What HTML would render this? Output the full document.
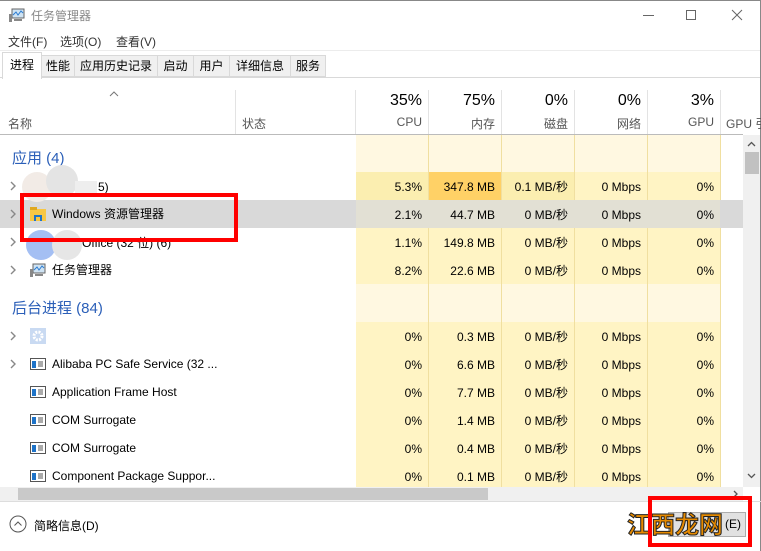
<!DOCTYPE html>
<html><head><meta charset="utf-8"><style>
*{margin:0;padding:0;box-sizing:border-box}
body{width:761px;height:551px;overflow:hidden;background:#fff;font-family:"Liberation Sans","Noto Sans CJK SC",sans-serif;font-size:12px;color:#000;position:relative}
.a{position:absolute;white-space:nowrap}
.r{text-align:right}
.tab{position:absolute;top:55px;height:22px;border:1px solid #d9d9d9;background:#f0f0f0;font-size:12px;line-height:20px;text-align:center}
.cell{position:absolute;height:28px;line-height:30px;text-align:right;padding-right:6px;font-size:12px}
.vl{position:absolute;width:1px;background:#e3e3e3}
.chev{position:absolute;left:10px;width:6px;height:10px}
.nm{position:absolute;line-height:16px}
</style></head><body>
<div class="a" style="left:0;top:0;width:761px;height:1px;background:#888"></div>
<div class="a" style="left:760px;top:0;width:1px;height:551px;background:#888"></div>
<svg class="a" style="left:9px;top:8px" width="16" height="14"><rect x="3" y="1" width="12" height="9" fill="#cfe3f3" stroke="#666"/><polyline points="4,7 7,4 9,7 12,3 14,5" fill="none" stroke="#2b7bd1"/><rect x="0" y="6" width="3" height="8" fill="#888"/><rect x="5" y="11" width="8" height="2" fill="#888"/></svg>
<div class="a" style="left:31px;top:7px;color:#888;font-size:12px">任务管理器</div>
<div class="a" style="left:643px;top:15px;width:11px;height:1px;background:#666"></div>
<div class="a" style="left:686px;top:10px;width:10px;height:10px;border:1px solid #666"></div>
<svg class="a" style="left:731px;top:9px" width="12" height="12"><path d="M1 1L11 11M11 1L1 11" stroke="#666"/></svg>
<div class="a" style="left:8px;top:33px;color:#333">文件(F)</div>
<div class="a" style="left:60px;top:33px;color:#333">选项(O)</div>
<div class="a" style="left:116px;top:33px;color:#333">查看(V)</div>
<div class="a" style="left:0;top:50px;width:760px;height:1px;background:#ececec"></div>
<div class="a" style="left:0;top:77px;width:760px;height:1px;background:#d9d9d9"></div>
<div class="tab" style="left:41px;width:34px">性能</div>
<div class="tab" style="left:74px;width:84px">应用历史记录</div>
<div class="tab" style="left:157px;width:37px">启动</div>
<div class="tab" style="left:193px;width:37px">用户</div>
<div class="tab" style="left:229px;width:62px">详细信息</div>
<div class="tab" style="left:290px;width:36px">服务</div>
<div class="a" style="left:2px;top:52px;width:40px;height:27px;background:#fff;border:1px solid #d9d9d9;border-bottom:none;line-height:24px;text-align:center">进程</div>
<svg class="a" style="left:109px;top:91px" width="10" height="6"><path d="M1 5L5 1L9 5" fill="none" stroke="#777"/></svg>
<div class="a" style="left:8px;top:115px;color:#555">名称</div>
<div class="a" style="left:242px;top:115px;color:#555">状态</div>
<div class="vl" style="left:235px;top:90px;height:44px"></div>
<div class="vl" style="left:355px;top:90px;height:44px"></div>
<div class="vl" style="left:428px;top:90px;height:44px"></div>
<div class="vl" style="left:501px;top:90px;height:44px"></div>
<div class="vl" style="left:574px;top:90px;height:44px"></div>
<div class="vl" style="left:647px;top:90px;height:44px"></div>
<div class="vl" style="left:720px;top:90px;height:44px"></div>
<div class="a r" style="left:355px;width:67px;top:92px;font-size:16px">35%</div>
<div class="a r" style="left:428px;width:67px;top:92px;font-size:16px">75%</div>
<div class="a r" style="left:501px;width:67px;top:92px;font-size:16px">0%</div>
<div class="a r" style="left:574px;width:67px;top:92px;font-size:16px">0%</div>
<div class="a r" style="left:647px;width:67px;top:92px;font-size:16px">3%</div>
<div class="a r" style="left:355px;width:67px;top:115px;color:#555">CPU</div>
<div class="a r" style="left:428px;width:67px;top:115px;color:#555">内存</div>
<div class="a r" style="left:501px;width:67px;top:115px;color:#555">磁盘</div>
<div class="a r" style="left:574px;width:67px;top:115px;color:#555">网络</div>
<div class="a r" style="left:647px;width:67px;top:115px;color:#555">GPU</div>
<div class="a" style="left:726px;top:115px;color:#555">GPU 引</div>
<div class="a" style="left:0;top:134px;width:743px;height:1px;background:#bbb"></div>
<div class="a" style="left:356px;top:135px;width:364px;height:352px;background:#fff4c4"></div>
<div class="a" style="left:356px;top:135px;width:364px;height:37px;background:#fff8e1"></div>
<div class="a" style="left:356px;top:284px;width:364px;height:38px;background:#fff8e1"></div>
<div class="vl" style="left:428px;top:135px;height:352px;background:#f0dfa0"></div>
<div class="vl" style="left:501px;top:135px;height:352px;background:#f0dfa0"></div>
<div class="vl" style="left:574px;top:135px;height:352px;background:#f0dfa0"></div>
<div class="vl" style="left:647px;top:135px;height:352px;background:#f0dfa0"></div>
<div class="vl" style="left:720px;top:135px;height:352px;background:#f0dfa0"></div>
<div class="a" style="left:12px;top:147px;font-size:15px;color:#2b5fb8">应用 (4)</div>
<div class="a" style="left:12px;top:297px;font-size:15px;color:#2b5fb8">后台进程 (84)</div>
<div class="a" style="left:0;top:200px;width:743px;height:28px;background:#d9d9d9"></div>
<div class="a" style="left:356px;top:200px;width:364px;height:28px;background:#e2e0d4"></div>
<div class="a" style="left:356px;top:172px;width:72px;height:28px;background:#fbeeb0"></div>
<div class="a" style="left:429px;top:172px;width:72px;height:28px;background:#ffd166"></div>
<div class="a" style="left:502px;top:172px;width:72px;height:28px;background:#fbeeb0"></div>
<div class="cell" style="left:355px;top:172px;width:73px">5.3%</div><div class="cell" style="left:428px;top:172px;width:73px">347.8 MB</div><div class="cell" style="left:501px;top:172px;width:73px">0.1 MB/秒</div><div class="cell" style="left:574px;top:172px;width:73px">0 Mbps</div><div class="cell" style="left:647px;top:172px;width:73px">0%</div>
<div class="cell" style="left:355px;top:200px;width:73px">2.1%</div><div class="cell" style="left:428px;top:200px;width:73px">44.7 MB</div><div class="cell" style="left:501px;top:200px;width:73px">0 MB/秒</div><div class="cell" style="left:574px;top:200px;width:73px">0 Mbps</div><div class="cell" style="left:647px;top:200px;width:73px">0%</div>
<div class="cell" style="left:355px;top:228px;width:73px">1.1%</div><div class="cell" style="left:428px;top:228px;width:73px">149.8 MB</div><div class="cell" style="left:501px;top:228px;width:73px">0 MB/秒</div><div class="cell" style="left:574px;top:228px;width:73px">0 Mbps</div><div class="cell" style="left:647px;top:228px;width:73px">0%</div>
<div class="cell" style="left:355px;top:256px;width:73px">8.2%</div><div class="cell" style="left:428px;top:256px;width:73px">22.6 MB</div><div class="cell" style="left:501px;top:256px;width:73px">0 MB/秒</div><div class="cell" style="left:574px;top:256px;width:73px">0 Mbps</div><div class="cell" style="left:647px;top:256px;width:73px">0%</div>
<div class="cell" style="left:355px;top:322px;width:73px">0%</div><div class="cell" style="left:428px;top:322px;width:73px">0.3 MB</div><div class="cell" style="left:501px;top:322px;width:73px">0 MB/秒</div><div class="cell" style="left:574px;top:322px;width:73px">0 Mbps</div><div class="cell" style="left:647px;top:322px;width:73px">0%</div>
<div class="cell" style="left:355px;top:350px;width:73px">0%</div><div class="cell" style="left:428px;top:350px;width:73px">6.6 MB</div><div class="cell" style="left:501px;top:350px;width:73px">0 MB/秒</div><div class="cell" style="left:574px;top:350px;width:73px">0 Mbps</div><div class="cell" style="left:647px;top:350px;width:73px">0%</div>
<div class="cell" style="left:355px;top:378px;width:73px">0%</div><div class="cell" style="left:428px;top:378px;width:73px">7.7 MB</div><div class="cell" style="left:501px;top:378px;width:73px">0 MB/秒</div><div class="cell" style="left:574px;top:378px;width:73px">0 Mbps</div><div class="cell" style="left:647px;top:378px;width:73px">0%</div>
<div class="cell" style="left:355px;top:406px;width:73px">0%</div><div class="cell" style="left:428px;top:406px;width:73px">1.4 MB</div><div class="cell" style="left:501px;top:406px;width:73px">0 MB/秒</div><div class="cell" style="left:574px;top:406px;width:73px">0 Mbps</div><div class="cell" style="left:647px;top:406px;width:73px">0%</div>
<div class="cell" style="left:355px;top:434px;width:73px">0%</div><div class="cell" style="left:428px;top:434px;width:73px">0.4 MB</div><div class="cell" style="left:501px;top:434px;width:73px">0 MB/秒</div><div class="cell" style="left:574px;top:434px;width:73px">0 Mbps</div><div class="cell" style="left:647px;top:434px;width:73px">0%</div>
<div class="cell" style="left:355px;top:462px;width:73px">0%</div><div class="cell" style="left:428px;top:462px;width:73px">0.1 MB</div><div class="cell" style="left:501px;top:462px;width:73px">0 MB/秒</div><div class="cell" style="left:574px;top:462px;width:73px">0 Mbps</div><div class="cell" style="left:647px;top:462px;width:73px">0%</div>
<svg class="chev" style="top:181px" viewBox="0 0 6 10"><path d="M1 1L5 5L1 9" fill="none" stroke="#888" stroke-width="1.4"/></svg>
<svg class="chev" style="top:209px" viewBox="0 0 6 10"><path d="M1 1L5 5L1 9" fill="none" stroke="#888" stroke-width="1.4"/></svg>
<svg class="chev" style="top:237px" viewBox="0 0 6 10"><path d="M1 1L5 5L1 9" fill="none" stroke="#888" stroke-width="1.4"/></svg>
<svg class="chev" style="top:265px" viewBox="0 0 6 10"><path d="M1 1L5 5L1 9" fill="none" stroke="#888" stroke-width="1.4"/></svg>
<svg class="chev" style="top:331px" viewBox="0 0 6 10"><path d="M1 1L5 5L1 9" fill="none" stroke="#888" stroke-width="1.4"/></svg>
<svg class="chev" style="top:359px" viewBox="0 0 6 10"><path d="M1 1L5 5L1 9" fill="none" stroke="#888" stroke-width="1.4"/></svg>
<div class="a" style="left:22px;top:172px;width:30px;height:30px;border-radius:50%;background:#f2ebe6"></div>
<div class="a" style="left:46px;top:165px;width:32px;height:32px;border-radius:50%;background:#e4e4e4"></div>
<div class="a" style="left:75px;top:181px;width:22px;height:12px;background:#eee"></div>
<div class="nm" style="left:98px;top:179px">5)</div>
<div class="a" style="left:26px;top:230px;width:30px;height:30px;border-radius:50%;background:#a4bff3"></div>
<div class="a" style="left:52px;top:230px;width:30px;height:30px;border-radius:50%;background:#e6e6e6"></div>
<div class="nm" style="left:82px;top:235px">Office (32 位) (6)</div>
<svg class="a" style="left:30px;top:207px" width="16" height="14"><rect x="0" y="2" width="16" height="12" fill="#f7c744"/><rect x="0" y="0" width="7" height="3" fill="#e0a820"/><rect x="4" y="8" width="8" height="6" fill="#1e73c8"/><rect x="6" y="10" width="4" height="4" fill="#f7c744"/></svg>
<div class="nm" style="left:52px;top:206px">Windows 资源管理器</div>
<svg class="a" style="left:30px;top:263px" width="16" height="14"><rect x="3" y="1" width="12" height="9" fill="#cfe3f3" stroke="#666"/><polyline points="4,7 7,4 9,7 12,3 14,5" fill="none" stroke="#2b7bd1"/><rect x="0" y="6" width="3" height="8" fill="#888"/><rect x="5" y="11" width="8" height="2" fill="#888"/></svg>
<div class="nm" style="left:52px;top:262px">任务管理器</div>
<svg class="a" style="left:30px;top:328px" width="16" height="16"><rect width="16" height="16" fill="#c9daf2"/><circle cx="8" cy="8" r="4" fill="none" stroke="#fff" stroke-width="3" stroke-dasharray="2 1.2"/></svg>
<svg class="a" style="left:30px;top:358px" width="16" height="12"><rect x=".5" y=".5" width="15" height="11" fill="#fff" stroke="#555"/><rect x="2" y="3" width="4" height="7" fill="#1e73c8"/><path d="M8 4h5M8 6h5M8 8h5" stroke="#555"/></svg>
<div class="nm" style="left:52px;top:356px">Alibaba PC Safe Service (32 ...</div>
<svg class="a" style="left:30px;top:386px" width="16" height="12"><rect x=".5" y=".5" width="15" height="11" fill="#fff" stroke="#555"/><rect x="2" y="3" width="4" height="7" fill="#1e73c8"/><path d="M8 4h5M8 6h5M8 8h5" stroke="#555"/></svg>
<div class="nm" style="left:52px;top:384px">Application Frame Host</div>
<svg class="a" style="left:30px;top:414px" width="16" height="12"><rect x=".5" y=".5" width="15" height="11" fill="#fff" stroke="#555"/><rect x="2" y="3" width="4" height="7" fill="#1e73c8"/><path d="M8 4h5M8 6h5M8 8h5" stroke="#555"/></svg>
<div class="nm" style="left:52px;top:412px">COM Surrogate</div>
<svg class="a" style="left:30px;top:442px" width="16" height="12"><rect x=".5" y=".5" width="15" height="11" fill="#fff" stroke="#555"/><rect x="2" y="3" width="4" height="7" fill="#1e73c8"/><path d="M8 4h5M8 6h5M8 8h5" stroke="#555"/></svg>
<div class="nm" style="left:52px;top:440px">COM Surrogate</div>
<svg class="a" style="left:30px;top:470px" width="16" height="12"><rect x=".5" y=".5" width="15" height="11" fill="#fff" stroke="#555"/><rect x="2" y="3" width="4" height="7" fill="#1e73c8"/><path d="M8 4h5M8 6h5M8 8h5" stroke="#555"/></svg>
<div class="nm" style="left:52px;top:468px">Component Package Suppor...</div>
<div class="a" style="left:743px;top:135px;width:17px;height:352px;background:#f0f0f0"></div>
<div class="a" style="left:745px;top:152px;width:14px;height:22px;background:#c1c1c1"></div>
<svg class="a" style="left:747px;top:141px" width="9" height="6"><path d="M1 5L4.5 1.5L8 5" fill="none" stroke="#555" stroke-width="1.3"/></svg>
<svg class="a" style="left:747px;top:473px" width="9" height="6"><path d="M1 1L4.5 4.5L8 1" fill="none" stroke="#555" stroke-width="1.3"/></svg>
<div class="a" style="left:0;top:487px;width:743px;height:14px;background:#f0f0f0"></div>
<div class="a" style="left:18px;top:488px;width:470px;height:12px;background:#c9c9c9"></div>
<svg class="a" style="left:733px;top:490px" width="6" height="8"><path d="M1 1L4 4L1 7" fill="none" stroke="#555" stroke-width="1.3"/></svg>
<div class="a" style="left:0;top:501px;width:761px;height:1px;background:#ddd"></div>
<svg class="a" style="left:9px;top:515px" width="18" height="18"><circle cx="9" cy="9" r="8" fill="none" stroke="#555"/><path d="M5.5 10.5L9 7L12.5 10.5" fill="none" stroke="#555"/></svg>
<div class="a" style="left:34px;top:517px">简略信息(D)</div>
<div class="a" style="left:668px;top:512px;width:78px;height:25px;background:#e1e1e1;border:1px solid #adadad;line-height:23px;text-align:right;padding-right:4px">(E)</div>
<div class="a" style="left:627px;top:505px;font-size:24px;font-weight:bold;color:#e68a00;-webkit-text-stroke:1px #222">江西龙网</div>
<div class="a" style="left:20px;top:193px;width:218px;height:49px;border:4px solid #f00"></div>
<div class="a" style="left:648px;top:496px;width:104px;height:51px;border:4px solid #f00"></div>
</body></html>
